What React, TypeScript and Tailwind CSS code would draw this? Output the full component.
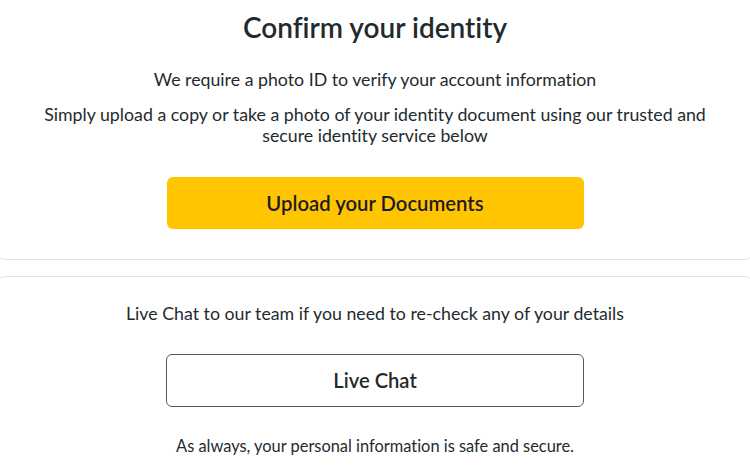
export default function App() {
  const font = { fontFamily: 'Lato, "Open Sans", sans-serif' };
  return (
    <div className="w-[750px] h-[467px] overflow-hidden bg-white text-[#1f2b2e] [font-variant-ligatures:none]" style={font}>
      <div className="mx-[-3px] mt-[-10px] border border-[#e1e3e3] rounded-lg pt-[20px] pb-[30px] flex flex-col items-center text-center">
        <h1 className="text-[28px] leading-[32px] font-semibold">Confirm your identity</h1>
        <p className="mt-[26px] text-[17.75px] leading-[21px]">We require a photo ID to verify your account information</p>
        <p className="mt-[14px] text-[17.75px] leading-[21px] w-[680px]">
          Simply upload a copy or take a photo of your identity document using our trusted and secure identity service below
        </p>
        <button className="mt-[31px] w-[417px] h-[52px] rounded-md bg-[#ffc500] text-[20.3px] font-semibold text-[#1f1a24]">
          Upload your Documents
        </button>
      </div>
      <div className="mx-[-3px] mt-[16px] border border-[#e1e3e3] rounded-lg pt-[26px] pb-[20px] flex flex-col items-center text-center">
        <p className="text-[17.75px] leading-[21px]">Live Chat to our team if you need to re-check any of your details</p>
        <button className="mt-[30px] w-[418px] h-[53px] rounded-md border border-[#555a5c] bg-white text-[20.2px] font-semibold">
          Live Chat
        </button>
        <p className="mt-[29px] text-[16.4px] leading-[20px]">As always, your personal information is safe and secure.</p>
      </div>
    </div>
  );
}
